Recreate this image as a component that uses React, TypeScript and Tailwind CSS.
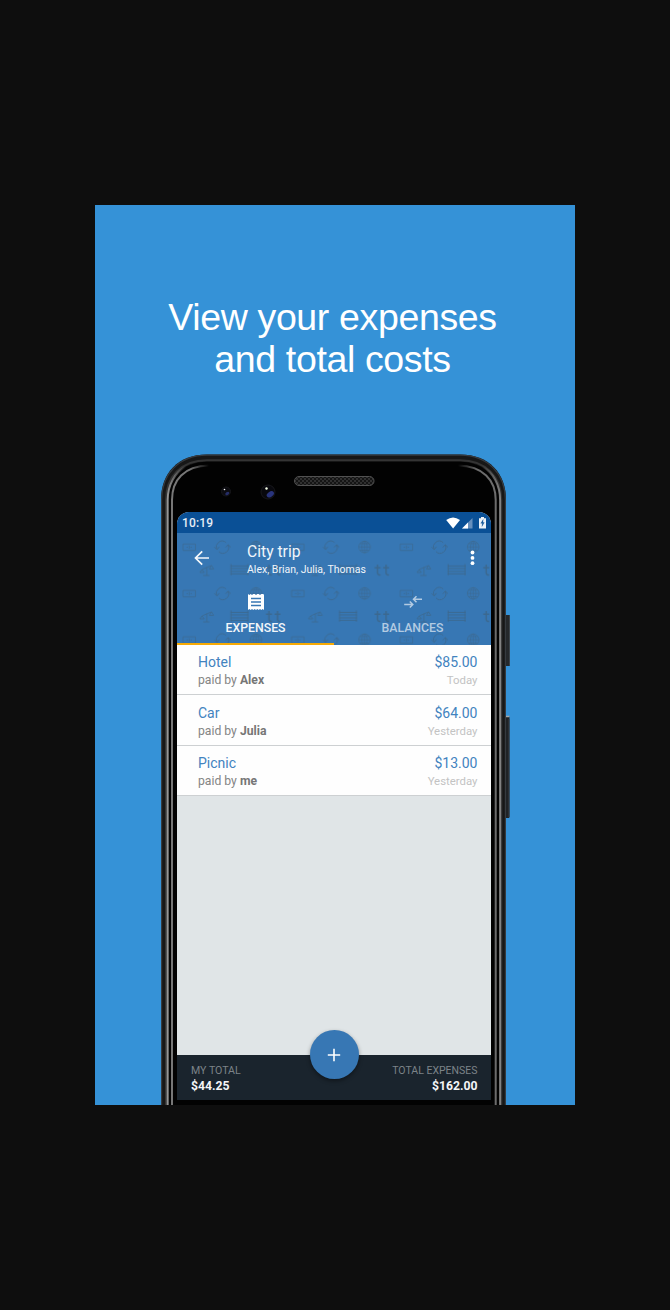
import React from "react";

const expenses = [
  { title: "Hotel", payer: "Alex", amount: "$85.00", date: "Today" },
  { title: "Car", payer: "Julia", amount: "$64.00", date: "Yesterday" },
  { title: "Picnic", payer: "me", amount: "$13.00", date: "Yesterday" },
];

function PhoneBody() {
  return (
    <svg className="absolute left-0 top-0" width="350" height="652" viewBox="161 454 350 652" fill="none">
      <defs>
        <pattern id="grille" width="4" height="4" patternUnits="userSpaceOnUse">
          <rect width="4" height="4" fill="#303030" />
          <path d="M0 0h2v2H0zM2 2h2v2H2z" fill="#141414" />
        </pattern>
        <linearGradient id="outerLeft" x1="167" y1="0" x2="186" y2="0" gradientUnits="userSpaceOnUse">
          <stop offset="0" stopColor="#999" />
          <stop offset="1" stopColor="#999" stopOpacity="0" />
        </linearGradient>
        <linearGradient id="innerLeft" x1="171" y1="0" x2="209" y2="0" gradientUnits="userSpaceOnUse">
          <stop offset="0" stopColor="#777" />
          <stop offset="0.5" stopColor="#777" />
          <stop offset="1" stopColor="#777" stopOpacity="0" />
        </linearGradient>
        <linearGradient id="outerRight" x1="501" y1="0" x2="482" y2="0" gradientUnits="userSpaceOnUse">
          <stop offset="0" stopColor="#858585" />
          <stop offset="1" stopColor="#858585" stopOpacity="0" />
        </linearGradient>
        <linearGradient id="innerRight" x1="497" y1="0" x2="458" y2="0" gradientUnits="userSpaceOnUse">
          <stop offset="0" stopColor="#6c6c6c" />
          <stop offset="0.5" stopColor="#6c6c6c" />
          <stop offset="1" stopColor="#6c6c6c" stopOpacity="0" />
        </linearGradient>
      </defs>
      <rect x="505" y="615" width="5" height="51" rx="1" fill="#25282b" />
      <path d="M509.5 616v49" stroke="#3b4248" />
      <rect x="505" y="716" width="4.500" height="102" rx="1" fill="#202326" />
      <path d="M506 716.500h3.500" stroke="#a3a8ac" strokeWidth="1.500" />
      <path d="M509 719v98" stroke="#383f45" />
      <path d="M161 1106V500C161 473 178 454.500 207 454.500H460C489 454.500 506 473 506 500V1106Z" fill="#171717" />
      <path d="M161.600 1106V500C161.600 474 179 455.100 207 455.100H460C488 455.100 505.400 474 505.400 500V1106" stroke="#363b40" strokeWidth="1.200" />
      <path d="M166 1106V500C166 477 181 460.200 207 460.200H460C486 460.200 501.300 477 501.300 500V1106" stroke="#343434" strokeWidth="2" />
      <path d="M167.500 1106V500C167.500 478 183 461.700 207 461.700H460C484 461.700 499.500 478 499.500 500V1106Z" fill="#020202" />
      <path d="M167.700 1106V500C167.700 485 175 472 186 466.500" stroke="url(#outerLeft)" strokeWidth="2" />
      <path d="M172 1106V500C172 480 184 466 209 465.500" stroke="url(#innerLeft)" strokeWidth="2" />
      <path d="M500.100 1106V500C500.100 485 493 472 482 466.500" stroke="url(#outerRight)" strokeWidth="2" />
      <path d="M495.700 1106V500C495.700 480 483 466 458 465.500" stroke="url(#innerRight)" strokeWidth="2" />
      <rect x="294.500" y="476.500" width="79.500" height="9" rx="4.500" fill="url(#grille)" stroke="#515151" />
      <circle cx="226" cy="491.500" r="4.500" fill="#0b0b10" stroke="#16161a" />
      <ellipse cx="227.300" cy="493.500" rx="2.200" ry="1.500" fill="#252d66" transform="rotate(-35 227.300 493.500)" />
      <circle cx="224.500" cy="489.500" r=".8" fill="#fff" />
      <circle cx="268" cy="492" r="7" fill="#08080d" stroke="#17171b" />
      <ellipse cx="270.300" cy="494.300" rx="4" ry="2.600" fill="#29347c" transform="rotate(-35 270.300 494.300)" />
      <circle cx="266.500" cy="488.500" r="1.200" fill="#f5ffe8" />
    </svg>
  );
}

function HeaderPattern() {
  return (
    <svg className="absolute left-0 top-0" width="314" height="112" viewBox="177 533 314 112" fill="none">
      <defs>
        <pattern id="doodles" x="177" y="533" width="108.600" height="46.400" patternUnits="userSpaceOnUse">
          <g stroke="#3b688f" strokeWidth=".7">
            <path d="M6 11h12.500v6.500H6zM12.200 12.500v3.500M9.500 14.200h1.500M13.500 14.200h1.500" />
            <path d="M39.800 16.300A5.800 5.800 0 0 1 49 9.600M51 11.800A5.800 5.800 0 0 1 41.800 18.600M37.400 14l2.600 2.600 2.400-3M48.600 14.500l2.500-2.800 2.700 2.600" strokeWidth=".9" />
            <circle cx="79" cy="14" r="5.800" />
            <ellipse cx="79" cy="14" rx="2.700" ry="5.800" strokeWidth=".6" />
            <path d="M73.200 14h11.600M79 8.200v11.600M74.500 10.800h9M74.500 17.200h9" strokeWidth=".6" />
            <path d="M26 42.500h6.500M29.800 42.500V34M25 36.500l9.500-4M22.800 39.500h4.400l-2.200-3zM32.300 36h4.400l-2.200-3.500z" strokeWidth=".8" />
            <path d="M54 31v11.500M70.800 31v11.500M53.500 33h18M53.500 35.500h18M53.500 38.500h18M53.500 41h18" strokeWidth=".9" />
            <path d="M92 31.500v8.500q0 2.200 3 2M89 34.700h6M100.500 31.500v8.500q0 2.200 3 2M97.500 34.700h6" strokeWidth="1.500" />
          </g>
        </pattern>
      </defs>
      <rect x="177" y="533" width="314" height="112" fill="url(#doodles)" />
    </svg>
  );
}

function StatusBar() {
  return (
    <div className="flex h-[21px] shrink-0 items-center justify-between bg-[#0a5096] pl-[5px] pr-[4px] pt-px">
      <span className="text-[12px] font-medium leading-none tracking-[0.15px] text-[#e5edf5]">10:19</span>
      <svg width="41" height="13" viewBox="446 516.500 41 13">
        <path d="M446.200 519.500Q453 514.500 460 519.500L453.100 528Z" fill="#fff" />
        <path d="M472.500 517.500v10.500H462Z" fill="#668fbd" />
        <path d="M468 522v6h-6Z" fill="#fff" />
        <path d="M481 516.500h3v1.200h2V528h-7V517.700h2z" fill="#eef3f8" />
        <path d="M483.200 519l-2.400 3.800h1.600l-.5 3.200 2.400-4h-1.500z" fill="#0a5096" stroke="#0a5096" strokeWidth=".3" />
      </svg>
    </div>
  );
}

function AppHeader() {
  return (
    <header className="relative h-[112px] shrink-0 bg-[#3777b4]">
      <HeaderPattern />
      <div className="relative flex h-[50px] items-start text-[#f0f5fa]">
        <svg className="ml-[17px] mt-[17px]" width="16" height="16" viewBox="0 0 16 16" fill="none" stroke="#f5f8fb" strokeWidth="1.700">
          <path d="M15 8H2M8.200 1.300 1.500 8l6.700 6.700" />
        </svg>
        <div className="ml-[37px] mt-[9px] grow">
          <h2 className="text-[15.700px] leading-[20px]">City trip</h2>
          <p className="pt-px text-[10.500px] leading-[14px]">Alex, Brian, Julia, Thomas</p>
        </div>
        <svg className="mr-[16px] mt-[17px]" width="5" height="16" viewBox="0 0 5 16" fill="#fff">
          <circle cx="2.500" cy="2.500" r="1.900" />
          <circle cx="2.500" cy="7.900" r="1.900" />
          <circle cx="2.500" cy="13.200" r="1.900" />
        </svg>
      </div>
      <nav className="relative grid h-[62px] grid-cols-2 text-[12.300px] font-medium">
        <div className="flex flex-col items-center border-b-2 border-[#f7aa05] pt-[10px] text-[#f2f6fa]">
          <svg width="18" height="18" viewBox="0 0 18 18">
            <path d="M1 1l1.330 1L3.670 1 5 2l1.330-1L7.670 1 9 2l1.330-1L11.670 1 13 2l1.330-1L15.670 1 17 1.500V17l-1.330-1-1.340 1L13 16l-1.330 1-1.340-1L9 17l-1.330-1-1.340 1L5 16l-1.330 1-1.340-1L1 17Z" fill="#fff" />
            <path d="M4 5.500h10M4 9h10M4 12.500h10" stroke="#3777b4" strokeWidth="1.500" />
          </svg>
          <span className="mt-[9px] leading-[16px]">EXPENSES</span>
        </div>
        <div className="flex flex-col items-center pt-[10px] text-[#b3cbe2]">
          <svg width="20" height="18" viewBox="0 0 20 18" fill="none" stroke="#b3cbe2" strokeWidth="1.500">
            <path d="M19 6.300h-8M13.500 3.300l-3 3 3 3M1.200 11.500h8M6.800 8.500l3 3-3 3" />
          </svg>
          <span className="mt-[9px] leading-[16px]">BALANCES</span>
        </div>
      </nav>
    </header>
  );
}

function ExpenseList() {
  return (
    <ul className="shrink-0">
      {expenses.map((e) => (
        <li key={e.title} className="flex h-[50.400px] justify-between border-b border-[#cdd0d2] bg-[#fefefe] pl-[21px] pr-[13.500px] pt-[8.200px]">
          <div>
            <div className="text-[14px] leading-[18px] text-[#4283bf]">{e.title}</div>
            <div className="text-[12.200px] leading-[18px] text-[#858585]">
              paid by <b className="font-bold text-[#767676]">{e.payer}</b>
            </div>
          </div>
          <div className="text-right">
            <div className="text-[14px] leading-[18px] text-[#4283bf]">{e.amount}</div>
            <div className="text-[11.400px] leading-[18px] text-[#c3c3c3]">{e.date}</div>
          </div>
        </li>
      ))}
    </ul>
  );
}

function TotalsBar() {
  return (
    <footer className="relative flex h-[45px] shrink-0 justify-between bg-[#1a242d] pl-[14px] pr-[13.500px] pt-[8px]">
      <div>
        <div className="text-[10.600px] leading-[15px] text-[#7c8388]">MY TOTAL</div>
        <div className="text-[12.200px] font-bold leading-[17px] text-[#f4f5f6]">$44.25</div>
      </div>
      <div className="text-right">
        <div className="text-[10.500px] leading-[15px] text-[#7c8388]">TOTAL EXPENSES</div>
        <div className="text-[12.200px] font-bold leading-[17px] text-[#f4f5f6]">$162.00</div>
      </div>
      <button className="absolute left-[132.500px] top-[-25px] flex h-[49px] w-[49px] items-center justify-center rounded-full bg-[#3777b4] shadow-[0_2px_4px_rgba(0,0,0,0.4)]">
        <svg width="14" height="14" viewBox="0 0 14 14" stroke="#fff" strokeWidth="1.600">
          <path d="M7 .8v12.400M.8 7h12.400" />
        </svg>
      </button>
    </footer>
  );
}

export default function App() {
  return (
    <div className="flex h-[1310px] w-[670px] items-center justify-center bg-[#0e0e0e]">
      <main className="flex h-[900px] w-[480px] flex-col overflow-hidden bg-[#3592d7]">
        <h1 className="mt-[91px] pr-[5px] text-center font-['Liberation_Sans',Arial,sans-serif] text-[37.500px] leading-[42px] tracking-[-0.360px] text-white">
          View your expenses
          <br />
          and total costs
        </h1>
        <section className="relative ml-[66px] mt-[74px] h-[651px] w-[350px] shrink-0 pl-[16px] pt-[58px]">
          <PhoneBody />
          <div className="relative flex h-[588px] w-[314px] flex-col overflow-hidden rounded-t-[12px] bg-[#e0e5e7] font-[Roboto,sans-serif]">
            <StatusBar />
            <AppHeader />
            <ExpenseList />
            <div className="grow" />
            <TotalsBar />
          </div>
        </section>
      </main>
    </div>
  );
}
